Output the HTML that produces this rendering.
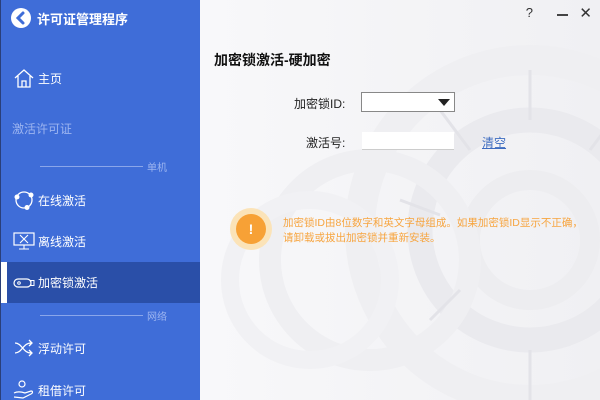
<!DOCTYPE html>
<html><head><meta charset="utf-8"><style>
*{margin:0;padding:0;box-sizing:border-box}
html,body{width:600px;height:400px;overflow:hidden}
body{font-family:"Liberation Sans","Noto Sans CJK SC",sans-serif;background:#f4f4f6;position:relative}
#side{position:absolute;left:0;top:0;width:200px;height:400px;background:#3f6dd8;color:#fff;border-left:1px solid #2a3f7a}
.it{position:absolute;left:0;width:200px;height:42px;font-size:12px;display:flex;align-items:center}
.it svg{position:absolute;left:12px}
.it span{position:absolute;left:37px}
.sep{position:absolute;left:39px;width:103px;height:1px;background:#8aa6ea}
.sl{position:absolute;left:146px;font-size:10px;color:#9db5f0}
#main{position:absolute;left:200px;top:0;width:400px;height:400px;background:linear-gradient(90deg,#f8f8fa,#f0f0f3)}
.lbl{position:absolute;font-size:12px;color:#222}
</style></head><body>
<div id="side">
 <svg style="position:absolute;left:10px;top:8px" width="20" height="20"><circle cx="10" cy="10" r="10" fill="#fff"/><path d="M12 5 L7 10 L12 15" stroke="#3f6dd8" stroke-width="3" fill="none" stroke-linecap="round"/></svg>
 <div style="position:absolute;left:36px;top:9px;font-size:13px;font-weight:bold">许可证管理程序</div>
 <div class="it" style="top:57px"><svg width="22" height="22" viewBox="0 0 22 22"><path d="M2 11 L11 3 L20 11 M5 9 V20 H17 V9 M9 20 V14 H13 V20" stroke="#fff" fill="none" stroke-width="1.3"/></svg><span>主页</span></div>
 <div style="position:absolute;left:11px;top:120px;font-size:12px;color:#9db5f0">激活许可证</div>
 <div class="sep" style="top:166px"></div><div class="sl" style="top:159px">单机</div>
 <div class="it" style="top:179px"><svg width="22" height="22" viewBox="0 0 22 22"><circle cx="11" cy="11" r="8" stroke="#fff" fill="none" stroke-width="1.3"/><circle cx="4" cy="8" r="2.5" fill="#fff"/><circle cx="18" cy="6" r="2.5" fill="#fff"/><circle cx="14" cy="18.5" r="2.5" fill="#fff"/></svg><span>在线激活</span></div>
 <div class="it" style="top:220px"><svg width="22" height="22" viewBox="0 0 22 22"><rect x="1" y="3" width="20" height="12" stroke="#fff" fill="none" stroke-width="1.2"/><path d="M7 5 L15 13 M15 5 L7 13 M11 15 V19 M6 19 H16" stroke="#fff" stroke-width="1.1"/></svg><span>离线激活</span></div>
 <div style="position:absolute;left:0;top:262px;width:200px;height:41px;background:#2a4fa8"></div>
 <div style="position:absolute;left:0;top:262px;width:6px;height:41px;background:#fff"></div>
 <div class="it" style="top:262px;height:41px"><svg width="22" height="22" viewBox="0 0 22 22"><rect x="1" y="7" width="17" height="8" rx="4" stroke="#fff" fill="none" stroke-width="1.2"/><circle cx="6" cy="11" r="1.3" stroke="#fff" fill="none"/><rect x="18" y="8.5" width="3" height="5" stroke="#fff" fill="none"/></svg><span>加密锁激活</span></div>
 <div class="sep" style="top:315px"></div><div class="sl" style="top:308px">网络</div>
 <div class="it" style="top:327px"><svg width="22" height="22" viewBox="0 0 22 22"><path d="M2 6 C9 6 10 16 18 16 M2 16 C9 16 10 6 18 6 M16 3 L19 6 L16 9 M16 13 L19 16 L16 19" stroke="#fff" fill="none" stroke-width="1.3"/></svg><span>浮动许可</span></div>
 <div class="it" style="top:369px"><svg width="22" height="22" viewBox="0 0 22 22"><circle cx="9" cy="5" r="3" stroke="#fff" fill="none" stroke-width="1.2"/><path d="M1 14 C5 12 9 13 12 14 L18 12 C20 12 20 14 18 15 L10 19 L1 18" stroke="#fff" fill="none" stroke-width="1.2"/></svg><span>租借许可</span></div>
</div>
<div id="main">
 <svg style="position:absolute;left:0;top:0" width="400" height="400">
  <g fill="none">
   <circle cx="330" cy="230" r="170" stroke-width="30" stroke="#efeff2"/>
   <circle cx="330" cy="230" r="110" stroke-width="25" stroke="#eaeaee"/>
   <circle cx="330" cy="240" r="60" stroke-width="20" stroke="#ededf0"/>
   <circle cx="170" cy="260" r="100" stroke-width="22" stroke="#efeff2"/>
   <circle cx="110" cy="280" r="80" stroke-width="18" stroke="#f1f1f4"/>
  </g>
  <g stroke="#e3e3e8" stroke-width="3">
   <path d="M330 70 L330 120 M420 110 L390 150 M460 200 L420 215 M240 110 L270 150 M200 200 L240 215 M450 300 L410 280 M330 400 L330 350 M230 320 L260 290"/>
  </g>
 </svg>
 <div style="position:absolute;right:67px;top:5px;font-size:13px;color:#333">?</div>
 <div style="position:absolute;right:32px;top:14px;width:11px;height:1.5px;background:#444"></div>
 <div style="position:absolute;right:8px;top:4px;font-size:15px;color:#333">✕</div>
 <div style="position:absolute;left:14px;top:50px;font-size:14px;font-weight:bold;color:#111">加密锁激活-硬加密</div>
 <div class="lbl" style="left:94px;top:95px">加密锁ID:</div>
 <div style="position:absolute;left:161px;top:92px;width:94px;height:20px;background:#fff;border:1px solid #888"><div style="position:absolute;right:4px;top:6px;border-left:6px solid transparent;border-right:6px solid transparent;border-top:7px solid #222"></div></div>
 <div class="lbl" style="left:106px;top:134px">激活号:</div>
 <div style="position:absolute;left:162px;top:132px;width:92px;height:18px;background:#fff;border-bottom:1px solid #ccc"></div>
 <div style="position:absolute;left:282px;top:134px;font-size:12px;color:#3e6cc0;text-decoration:underline">清空</div>
 <svg style="position:absolute;left:30px;top:208px" width="42" height="42"><circle cx="21" cy="21" r="21" fill="#fbe3b8"/><circle cx="21" cy="21" r="15" fill="#f7a136"/><text x="21" y="26" font-size="14" fill="#fff" font-weight="bold" text-anchor="middle" font-family="Liberation Sans">!</text></svg>
 <div style="position:absolute;left:83px;top:216px;width:305px;font-size:10.5px;line-height:15px;color:#f7a540">加密锁ID由8位数字和英文字母组成。如果加密锁ID显示不正确，请卸载或拔出加密锁并重新安装。</div>
</div>
</body></html>
